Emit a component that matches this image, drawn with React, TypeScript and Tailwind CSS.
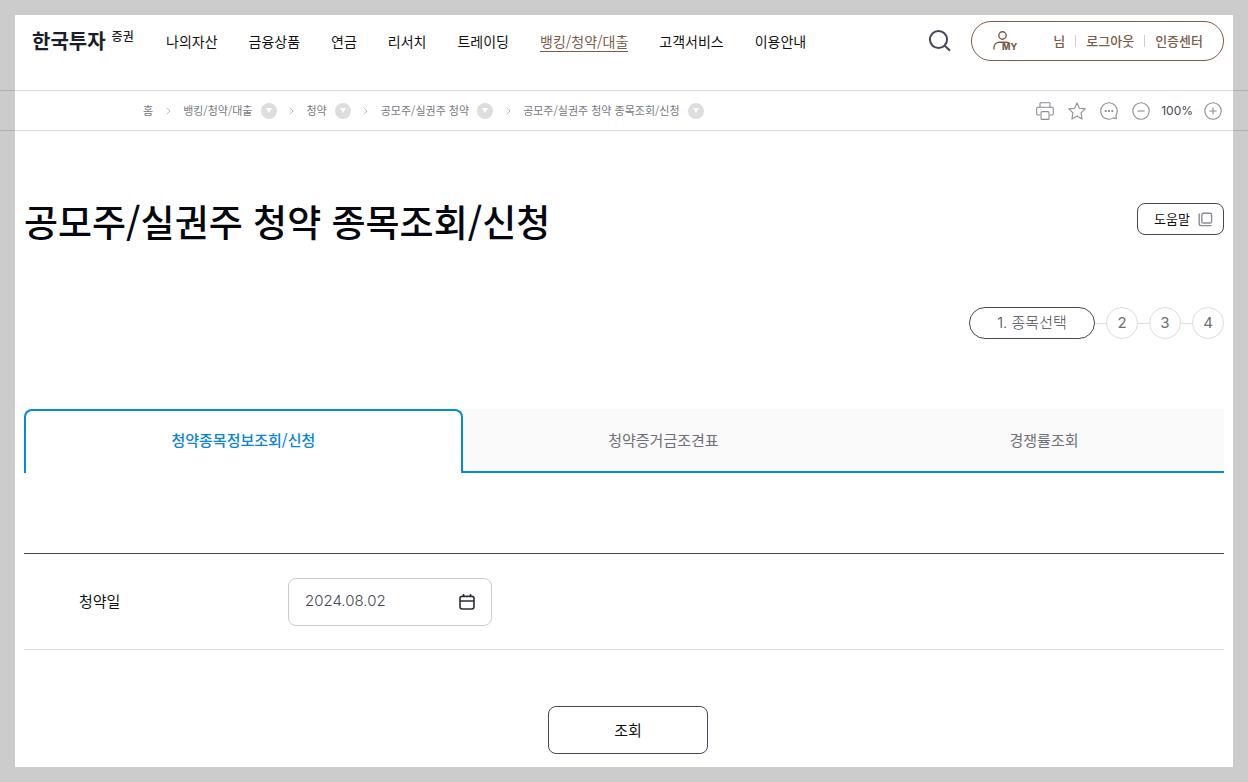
import React, { useState } from 'react'
import { clsx } from 'clsx'

const menus = [
	'나의자산',
	'금융상품',
	'연금',
	'리서치',
	'트레이딩',
	'뱅킹/청약/대출',
	'고객서비스',
	'이용안내',
]

const activeMenu = '뱅킹/청약/대출'

const crumbs = [
	'뱅킹/청약/대출',
	'청약',
	'공모주/실권주 청약',
	'공모주/실권주 청약 종목조회/신청',
]

const tabs = ['청약종목정보조회/신청', '청약증거금조견표', '경쟁률조회']

function SearchIcon() {
	return (
		<svg
			className="h-6 w-6 text-[#464855]"
			viewBox="0 0 24 24"
			fill="none"
			stroke="currentColor"
			strokeWidth={2}
		>
			<circle cx="10.5" cy="10.5" r="8.6" />
			<path d="M16.8 16.8l5.2 5" />
		</svg>
	)
}

function MyIcon() {
	return (
		<svg
			className="h-6 w-6 overflow-visible"
			viewBox="0 0 24 24"
			fill="none"
			stroke="currentColor"
			strokeWidth={1.4}
			aria-hidden="true"
		>
			<circle cx="10.5" cy="6.5" r="3.7" />
			<path d="M1.9 20.4v-1.6c0-3.3 2.5-5.6 5.6-5.6h6c1.7 0 2.9.3 4 1.2" />
			<text
				x="10"
				y="21"
				fill="currentColor"
				stroke="none"
				fontSize="9"
				fontWeight="800"
				fontFamily="Inter, sans-serif"
			>
				MY
			</text>
		</svg>
	)
}

function ToolIcon({ children }: { children: React.ReactNode }) {
	return (
		<svg
			className="h-[18px] w-[18px] text-[#8b8c95]"
			viewBox="0 0 18 18"
			fill="none"
			stroke="currentColor"
			strokeWidth={1.1}
			strokeLinejoin="round"
		>
			{children}
		</svg>
	)
}

function Chevron() {
	return (
		<span className="flex w-[30px] justify-center">
			<svg
				className="h-2 w-[5px] text-[#bbb]"
				viewBox="0 0 5 8"
				fill="none"
				stroke="currentColor"
				aria-hidden="true"
			>
				<path d="M.7.8L4 4 .7 7.2" />
			</svg>
		</span>
	)
}

function Header() {
	return (
		<header className="flex h-[90px] items-start pt-[21px] pr-6 pl-8">
			<a href="#" className="flex h-10 w-[134px] items-start gap-1.5 text-[#1c1e2b]">
				<span className="text-[20px] leading-10 font-bold">한국투자</span>
				<span className="pt-1.5 text-[12px] leading-[18px] font-medium">증권</span>
			</a>
			<nav className="flex h-10 items-center gap-[31px] text-[14px]">
				{menus.map((menu) => (
					<a
						key={menu}
						href="#"
						className={clsx(
							'border-b leading-5',
							menu === activeMenu
								? 'border-[#7b5b49] text-[#7b5b49]'
								: 'border-transparent text-[#111]',
						)}
					>
						{menu}
					</a>
				))}
			</nav>
			<div className="ml-auto flex items-center gap-[19px]">
				<button type="button" aria-label="검색">
					<SearchIcon />
				</button>
				<div className="flex h-10 w-[253px] items-center rounded-full border border-[#7b5b49] pr-5 pl-5 text-[13px] font-medium text-[#7b5b49]">
					<MyIcon />
					<span className="ml-auto">님</span>
					<span className="mx-2.5 h-3 w-px bg-[#d8cdc7]" />
					<a href="#">로그아웃</a>
					<span className="mx-2.5 h-3 w-px bg-[#d8cdc7]" />
					<a href="#">인증센터</a>
				</div>
			</div>
		</header>
	)
}

function Breadcrumb() {
	return (
		<div className="flex h-[41px] items-center justify-between border-y border-[#ddd] pr-[26px] pl-[143px]">
			<nav className="flex items-center text-[11px] text-[#77787f]">
				<a href="#">홈</a>
				{crumbs.map((crumb) => (
					<React.Fragment key={crumb}>
						<Chevron />
						<a href="#">{crumb}</a>
						<button
							type="button"
							aria-label={`${crumb} 메뉴 열기`}
							className="ml-2 flex h-4 w-4 items-center justify-center rounded-full bg-[#ddd]"
						>
							<svg className="h-[5px] w-1.5 fill-white" viewBox="0 0 6 5">
								<path d="M0 0h6L3 5z" />
							</svg>
						</button>
					</React.Fragment>
				))}
			</nav>
			<div className="flex items-center gap-3.5">
				<button type="button" aria-label="인쇄">
					<ToolIcon>
						<path d="M4 5.2V1.5c0-.5.3-.8.8-.8h8.4c.5 0 .8.3.8.8v3.7M4 13H2c-.8 0-1.3-.5-1.3-1.3V6.5c0-.8.5-1.3 1.3-1.3h14c.8 0 1.3.5 1.3 1.3v5.2c0 .8-.5 1.3-1.3 1.3h-2" />
						<rect x="5" y="9.6" width="8" height="7.8" rx="1" />
					</ToolIcon>
				</button>
				<button type="button" aria-label="즐겨찾기">
					<ToolIcon>
						<path d="M9 .9l2.4 5.3 5.8.7-4.2 4 1.1 6L9 14l-5.1 2.9 1.1-6-4.2-4 5.8-.7z" />
					</ToolIcon>
				</button>
				<button type="button" aria-label="의견">
					<ToolIcon>
						<path d="M15.9 13.4A8.2 8.2 0 1 0 13.4 15.9l3 .8z" />
						<path d="M4.8 9h1.8M8.1 9h1.8M11.4 9h1.8" strokeWidth={1.8} />
					</ToolIcon>
				</button>
				<button type="button" aria-label="축소">
					<ToolIcon>
						<circle cx="9" cy="9" r="8.2" />
						<path d="M5.4 9h7.2" />
					</ToolIcon>
				</button>
				<span className="-mx-[3px] font-['Inter'] text-[12px] text-[#464855]">100%</span>
				<button type="button" aria-label="확대">
					<ToolIcon>
						<circle cx="9" cy="9" r="8.2" />
						<path d="M5.4 9h7.2M9 5.4v7.2" />
					</ToolIcon>
				</button>
			</div>
		</div>
	)
}

function Steps() {
	return (
		<ol className="mt-[60px] flex items-center justify-end font-['Inter','Noto_Sans_CJK_KR',sans-serif] text-[15px] text-[#6d6e76]">
			<li
				aria-current="step"
				className="flex h-8 w-[126px] items-center justify-center rounded-full border border-[#464855] font-light text-[#464855]"
			>
				1. 종목선택
			</li>
			{[2, 3, 4].map((step) => (
				<li key={step} className="flex items-center">
					<span className="h-px w-[11px] bg-[#ddd]" />
					<span className="flex h-8 w-8 items-center justify-center rounded-full border border-[#ddd]">
						{step}
					</span>
				</li>
			))}
		</ol>
	)
}

export default function App() {
	const [tab, setTab] = useState(0)
	const [date, setDate] = useState('2024.08.02')

	return (
		<div
			lang="ko"
			className="min-h-screen bg-white font-['Noto_Sans_CJK_KR',sans-serif] whitespace-nowrap"
		>
			<Header />
			<Breadcrumb />
			<main className="px-6 pb-7">
				<div className="flex items-start justify-between pt-16">
					<h1 className="text-[37px] leading-[52px] font-medium text-[#05070f]">
						공모주/실권주 청약 종목조회/신청
					</h1>
					<button
						type="button"
						className="mt-2 flex h-8 items-center gap-2 rounded-lg border border-[#464855] pr-2.5 pl-4 text-[13px] text-[#111]"
					>
						도움말
						<svg
							className="h-[15px] w-[15px] text-[#8b8c95]"
							viewBox="0 0 15 15"
							fill="none"
							stroke="currentColor"
							strokeWidth={1.4}
							aria-hidden="true"
						>
							<rect x="3.8" y="1.2" width="9.8" height="9.8" rx="1.6" />
							<path d="M1.2 1.5v10.3c0 1.1.7 1.8 1.8 1.8h10.5" />
						</svg>
					</button>
				</div>

				<Steps />

				<div role="tablist" className="mt-[70px] flex h-16 text-[15px]">
					{tabs.map((label, i) => (
						<button
							key={label}
							type="button"
							role="tab"
							aria-selected={tab === i}
							onClick={() => setTab(i)}
							className={clsx(
								'flex-auto border-[#008bdc]',
								tab === i
									? 'rounded-t-lg border-2 border-b-0 pb-1 font-medium text-[#0a84d8]'
									: 'border-b-2 bg-[#fafafa] text-[#6d6e76]',
							)}
						>
							{label}
						</button>
					))}
				</div>

				<form onSubmit={(e) => e.preventDefault()}>
					<div className="mt-20 flex h-[97px] items-center border-t border-b border-t-[#464855] border-b-[#ddd]">
						<label htmlFor="date" className="w-[264px] pl-[55px] text-[15px] text-[#111]">
							청약일
						</label>
						<div className="flex h-12 w-[204px] items-center justify-between rounded-lg border border-[#ccc] px-4">
							<input
								id="date"
								type="text"
								value={date}
								onChange={(e) => setDate(e.target.value)}
								className="w-28 font-['Inter'] text-[15px] font-light text-[#464855] outline-none"
							/>
							<button type="button" aria-label="달력 열기">
								<svg
									className="h-4 w-4 text-[#2d2e36]"
									viewBox="0 0 16 16"
									fill="none"
									stroke="currentColor"
									strokeWidth={1.6}
								>
									<rect x="1" y="2.4" width="14" height="12.6" rx="2.2" />
									<path d="M1 7h14M4.5 0v3M11.5 0v3" />
								</svg>
							</button>
						</div>
					</div>
					<div className="mt-14 flex justify-center pl-2">
						<button
							type="submit"
							className="h-12 w-40 rounded-lg border border-[#464855] text-[15px] text-[#111]"
						>
							조회
						</button>
					</div>
				</form>
			</main>
			{/* translucent frame drawn over the page edges */}
			<div className="pointer-events-none fixed inset-0 border-[15px] border-black/20" />
		</div>
	)
}
